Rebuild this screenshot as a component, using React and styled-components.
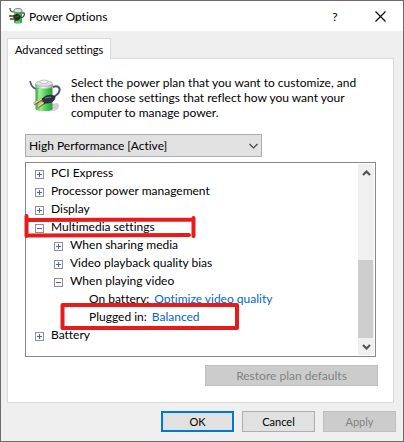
import React, { useState } from "react";
import styled, { createGlobalStyle } from "styled-components";

const ui = 'Lato, "Noto Sans", sans-serif';

const GlobalStyle = createGlobalStyle`
  *, *::before, *::after { box-sizing: border-box; }
  body { margin: 0; background: #efefef; color: #000; font: 12px/15px ${ui}; font-variant-ligatures: none; }
  button, select { font: inherit; color: inherit; border-radius: 0; margin: 0; }
`;

const Dialog = styled.main`
  display: flex;
  flex-direction: column;
  min-height: 100vh;
  border: 1px solid #6b6b6b;
  background: #efefef;
`;

const TitleBar = styled.header`
  display: flex;
  align-items: center;
  height: 30px;
  padding-left: 8px;
  background: #fff;
`;

const Title = styled.h1`
  flex: 1;
  margin: 0 0 0 4px;
  font-size: 12px;
  font-weight: 400;
  line-height: 15px;
`;

const CaptionButton = styled.button`
  display: grid;
  place-items: center;
  width: ${(p) => p.$width}px;
  height: 30px;
  padding: 0;
  border: 0;
  background: transparent;
`;

const Body = styled.div`
  display: flex;
  flex-direction: column;
  padding: 7px 7px 8px 6px;
`;

const Tab = styled.button`
  position: relative;
  z-index: 1;
  align-self: flex-start;
  height: 21px;
  margin-bottom: -1px;
  padding: 0 7px;
  border: 1px solid #d9d9d9;
  border-bottom: 0;
  background: #fff;
  font-size: 11px;
  white-space: nowrap;
`;

const Panel = styled.section`
  display: flex;
  flex-direction: column;
  margin-right: 2px;
  padding: 16px 15px 16px 17px;
  border: 1px solid #d9d9d9;
  background: #fff;
`;

const Intro = styled.div`
  display: flex;
  gap: 8px;
  min-height: 59px;
  padding-left: 4px;
`;

const IntroText = styled.p`
  flex: 1;
  max-width: 300px;
  margin: 0;
`;

const IntroIcon = styled.div`
  padding-top: 4px;
`;

const PlanField = styled.div`
  display: grid;
  width: 67%;
  min-width: 236px;
  & > * { grid-area: 1 / 1; }
  & > svg { align-self: center; justify-self: end; margin-right: 4px; pointer-events: none; }
`;

const PlanSelect = styled.select`
  appearance: none;
  width: 100%;
  height: 23px;
  padding: 0 20px 0 3px;
  border: 1px solid #adadad;
  background: #e1e1e1;
`;

const TreeBox = styled.div`
  display: flex;
  margin: 5px 2px 0 0;
  padding: 1px;
  border: 1px solid #828790;
`;

const Tree = styled.ul`
  flex: 1;
  margin: 0;
  padding: 0 0 11px;
  list-style: none;
`;

const Row = styled.li`
  position: relative;
  display: flex;
  align-items: center;
  gap: 7px;
  height: 18px;
  padding-left: ${(p) => (p.$leaf ? 62 : 8 + p.$level * 19)}px;
  white-space: nowrap;
`;

const Toggle = styled.button`
  display: grid;
  flex: none;
  width: 9px;
  height: 9px;
  margin-top: 2px;
  padding: 0;
  border: 0;
  background: none;
`;

const Setting = styled.span`
  display: flex;
  gap: 5px;
  padding-bottom: 2px;
`;

const ValueLink = styled.a`
  color: #0066cc;
  text-decoration: none;
`;

const Marker = styled.svg`
  position: absolute;
  top: -4px;
  left: ${(p) => p.$left}px;
  overflow: visible;
  pointer-events: none;
`;

const ScrollBar = styled.div`
  display: flex;
  flex-direction: column;
  width: 16px;
  background: #f0f0f0;
`;

const ScrollButton = styled.button`
  display: grid;
  place-items: center;
  height: 17px;
  padding: 0;
  border: 0;
  background: transparent;
`;

const ScrollTrack = styled.div`
  display: flex;
  flex: 1;
  flex-direction: column;
  justify-content: flex-end;
`;

const ScrollThumb = styled.div`
  height: 50%;
  margin-right: 1px;
  background: #cdcdcd;
`;

const PushButton = styled.button`
  width: ${(p) => (p.$wide ? 173 : 73)}px;
  height: 21px;
  padding: 0;
  border: ${(p) => (p.$primary ? "2px solid #0078d7" : "1px solid #adadad")};
  background: #e1e1e1;
  font-size: ${(p) => (p.$wide ? 12 : 11)}px;
  &:disabled { border-color: #bfbfbf; background: #cccccc; color: #838383; }
`;

const PanelActions = styled.div`
  display: flex;
  justify-content: flex-end;
  margin-top: 8px;
`;

const DialogActions = styled.footer`
  display: flex;
  justify-content: flex-end;
  gap: 8px;
  margin-top: 8px;
`;

function BatteryIcon({ size }) {
  return (
    <svg width={size} height={size} viewBox="0 0 34 34" aria-hidden="true">
      <defs>
        <linearGradient id="cell">
          <stop offset="0" stopColor="#3fa545" />
          <stop offset=".3" stopColor="#93ee90" />
          <stop offset=".6" stopColor="#52cf58" />
          <stop offset="1" stopColor="#2b9a37" />
        </linearGradient>
        <linearGradient id="cap">
          <stop offset="0" stopColor="#9da3a5" />
          <stop offset=".45" stopColor="#f8fafa" />
          <stop offset="1" stopColor="#9b9fa2" />
        </linearGradient>
      </defs>
      <path d="M21 32c7 1 11-4 8-8l-7 1z" fill="#d0d0d0" />
      <path d="M1 2c1 4 2 7 6 8" fill="none" stroke="#4b5268" strokeWidth="1.600" />
      <path d="M6.500 5v25c1 3 16 3 17 0V5z" fill="url(#cell)" />
      <path d="M6.500 5v3c3 2 14 2 17 0V5z" fill="url(#cap)" />
      <ellipse cx="15" cy="4.500" rx="8.500" ry="2.800" fill="#dfe2e3" stroke="#9da3a5" strokeWidth=".6" />
      <ellipse cx="15" cy="2.800" rx="4" ry="1.800" fill="#f6f7f7" stroke="#a1a6a8" strokeWidth=".6" />
      <path d="M10 10v19" stroke="#b5f7ad" strokeWidth="1.500" opacity=".7" />
      <path d="M24 8c5-2 8 1 6 5-1 3-4 3-6 6" fill="none" stroke="#4b5268" strokeWidth="1.900" />
      <path d="M13 20l4-3c3-1 8-1 9 1 0 4-4 6-9 6l-2 1z" fill="#303247" stroke="#20212e" strokeWidth=".8" />
      <path d="M16 19l6-1" stroke="#797c94" />
      <path d="M13 20.500L5 25M15 24l-6 4" stroke="#8a622d" strokeWidth="2.600" />
      <path d="M12.500 20L5 24.500M14.500 23.500L9 27.500" stroke="#f8dfab" strokeWidth="1.400" />
    </svg>
  );
}

function SmallBatteryIcon() {
  return (
    <svg width="16" height="16" viewBox="0 0 16 16" aria-hidden="true">
      <path d="M5 2v12c1 2 7 2 8 0V2z" fill="#2fae3c" />
      <path d="M6 4v4M7 14h4" stroke="#93e88d" />
      <path d="M5 2c1-2 7-2 8 0v2c-2 1-6 1-8 0z" fill="#dce2df" stroke="#626b69" strokeWidth=".8" />
      <path d="M1 0c0 3 1 4 4 4M13 5c3-1 3 2 1 4l-3 1" fill="none" stroke="#343a3d" strokeWidth="1.200" />
      <path d="M4 8l3-2c3 0 6 2 4 4-1 3-4 3-6 2z" fill="#252729" />
      <path d="M6 9l4-1" stroke="#606367" strokeWidth=".8" />
      <path d="M5 8H0M6 11H1" stroke="#554a2a" strokeWidth="2" />
      <path d="M4 8H0M5 11H1" stroke="#c7af72" strokeWidth=".7" />
    </svg>
  );
}

function Chevron({ up, bold }) {
  return (
    <svg width="9" height="6" viewBox="0 0 9 6" aria-hidden="true">
      <path
        d={up ? "M1 5l3.500-3.500L8 5" : bold ? "M1 1l3.500 3.500L8 1" : "M.5 1l4 4 4-4"}
        fill="none"
        stroke={bold ? "#555" : "#444"}
        strokeWidth={bold ? 2.2 : 1.2}
      />
    </svg>
  );
}

function ToggleIcon({ open }) {
  return (
    <svg width="9" height="9" viewBox="0 0 9 9" aria-hidden="true" shapeRendering="crispEdges">
      <rect x=".5" y=".5" width="8" height="8" fill="#fafafa" stroke="#919191" />
      <path d={open ? "M2 4.500h5" : "M2 4.500h5M4.500 2v5"} stroke="#4a63a8" />
    </svg>
  );
}

function SectionMarker() {
  return (
    <Marker $left={-2} width="172" height="24" viewBox="0 0 172 24" aria-hidden="true">
      <path d="M1.500 2v20M1.500 6L167 5.500M168.500 4V22M3 21.500L164 21" fill="none" stroke="#e81b1b" strokeWidth="4" strokeLinecap="round" />
    </Marker>
  );
}

function ValueMarker() {
  return (
    <Marker $left={34} width="180" height="28" viewBox="0 0 180 28" aria-hidden="true">
      <path d="M1.500 1V24M1.500 1H176V24H2" fill="none" stroke="#e81b1b" strokeWidth="4" strokeLinecap="round" strokeLinejoin="round" />
    </Marker>
  );
}

const settings = [
  { label: "PCI Express", level: 0 },
  { label: "Processor power management", level: 0 },
  { label: "Display", level: 0 },
  { label: "Multimedia settings", level: 0, open: true, marker: <SectionMarker /> },
  { label: "When sharing media", level: 1 },
  { label: "Video playback quality bias", level: 1 },
  { label: "When playing video", level: 1, open: true },
  { label: "On battery:", level: 2, value: "Optimize video quality" },
  { label: "Plugged in:", level: 2, value: "Balanced", marker: <ValueMarker /> },
  { label: "Battery", level: 0 },
];

function SettingRow({ item }) {
  const [open, setOpen] = useState(Boolean(item.open));
  return (
    <Row $level={item.level} $leaf={Boolean(item.value)}>
      {!item.value && (
        <Toggle aria-label={item.label} aria-expanded={open} onClick={() => setOpen(!open)}>
          <ToggleIcon open={open} />
        </Toggle>
      )}
      <Setting>
        {item.label}
        {item.value && <ValueLink href="#value">{item.value}</ValueLink>}
      </Setting>
      {item.marker}
    </Row>
  );
}

export default function App() {
  return (
    <>
      <GlobalStyle />
      <Dialog>
        <TitleBar>
          <SmallBatteryIcon />
          <Title>Power Options</Title>
          <CaptionButton $width={44}>?</CaptionButton>
          <CaptionButton $width={46} aria-label="Close">
            <svg width="11" height="11" viewBox="0 0 11 11" aria-hidden="true">
              <path d="M.5.5l10 10M10.500.5l-10 10" stroke="#000" strokeWidth="1.100" />
            </svg>
          </CaptionButton>
        </TitleBar>
        <Body>
          <Tab role="tab" aria-selected="true">Advanced settings</Tab>
          <Panel>
            <Intro>
              <IntroIcon><BatteryIcon size={34} /></IntroIcon>
              <IntroText>
                Select the power plan that you want to customize, and then choose settings that
                reflect how you want your computer to manage power.
              </IntroText>
            </Intro>
            <PlanField>
              <PlanSelect aria-label="Power plan">
                <option>High Performance [Active]</option>
              </PlanSelect>
              <Chevron />
            </PlanField>
            <TreeBox>
              <Tree>
                {settings.map((item) => <SettingRow key={item.label} item={item} />)}
              </Tree>
              <ScrollBar>
                <ScrollButton aria-label="Scroll up"><Chevron up bold /></ScrollButton>
                <ScrollTrack><ScrollThumb /></ScrollTrack>
                <ScrollButton aria-label="Scroll down"><Chevron bold /></ScrollButton>
              </ScrollBar>
            </TreeBox>
            <PanelActions>
              <PushButton $wide disabled>Restore plan defaults</PushButton>
            </PanelActions>
          </Panel>
          <DialogActions>
            <PushButton $primary>OK</PushButton>
            <PushButton>Cancel</PushButton>
            <PushButton disabled>Apply</PushButton>
          </DialogActions>
        </Body>
      </Dialog>
    </>
  );
}
